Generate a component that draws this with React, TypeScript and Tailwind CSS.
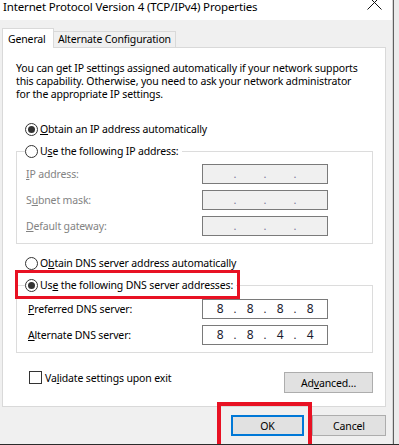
import React from 'react';

function Radio({ checked }: { checked?: boolean }) {
  return (
    <span className="w-[13px] h-[13px] rounded-full border border-[#333333] bg-white flex items-center justify-center shrink-0">
      {checked && <span className="w-[7px] h-[7px] rounded-full bg-[#333333]" />}
    </span>
  );
}

function IpField({ values, disabled }: { values?: string[]; disabled?: boolean }) {
  const cells = values ?? ['', '', '', ''];
  return (
    <div
      className={
        disabled
          ? 'w-[126px] h-[20px] border border-[#7a7a7a] bg-[#f0f0f0] flex items-center pl-[3px] text-[#7a7a9a]'
          : 'w-[126px] h-[20px] border border-[#7a7a7a] bg-white flex items-center pl-[3px] text-[#1a1a2e]'
      }
    >
      {cells.map((v, i) => (
        <React.Fragment key={i}>
          <span className="w-[28px] text-center text-[12px] leading-[18px]">{v}</span>
          {i < 3 && <span className="w-[2px] flex justify-center text-[11px] leading-[18px]">.</span>}
        </React.Fragment>
      ))}
    </div>
  );
}

function FieldRow({ label, values, disabled }: { label: React.ReactNode; values?: string[]; disabled?: boolean }) {
  return (
    <div className="flex items-center h-[20px]">
      <span className={disabled ? 'w-[177px] pl-[1px] text-[#838383]' : 'w-[177px] pl-[3px] text-black'}>{label}</span>
      <IpField values={values} disabled={disabled} />
    </div>
  );
}

export default function App() {
  return (
    <div className="w-[399px] h-[445px] flex flex-col bg-[#f0f0f0] overflow-hidden font-['Noto_Sans',sans-serif] text-[10.5px] tracking-[-0.15px] leading-[14px] text-black">
      <div className="flex h-[444px]">
        <div className="w-[393px] flex flex-col border-r border-[#d4d4d4] overflow-hidden">
          {/* title bar */}
          <div className="h-[20px] bg-white flex items-start justify-between pl-[3px] pr-[10px] shrink-0">
            <span className="text-[11.5px] leading-[14px] whitespace-nowrap">Internet Protocol Version 4 (TCP/IPv4) Properties</span>
            <svg width="15" height="15" viewBox="0 0 15 15" className="-mt-[5px]" fill="none" stroke="#111" strokeWidth="1">
              <path d="M0.5 0.5 L14.5 14.5 M14.5 0.5 L0.5 14.5" />
            </svg>
          </div>

          {/* tabs */}
          <div className="mt-[8px] pl-[2px] h-[19px] flex items-end">
            <div className="relative z-10 -mb-px w-[52px] h-[20px] bg-white border border-b-0 border-[#d9d9d9] pl-[5px] pt-[2px] leading-[16px] whitespace-nowrap">
              General
            </div>
            <div className="w-[122px] h-[16px] border-t border-r border-[#d9d9d9] pl-[4px] leading-[15px] whitespace-nowrap">
              Alternate Configuration
            </div>
          </div>

          {/* panel */}
          <div className="ml-[2px] w-[384px] h-[360px] bg-white border border-[#d9d9d9] flex flex-col pl-[13px] pr-[12px] shrink-0">
            <p className="mt-[14px] leading-[13px] whitespace-nowrap">
              You can get IP settings assigned automatically if your network supports
              <br />
              this capability. Otherwise, you need to ask your network administrator
              <br />
              for the appropriate IP settings.
            </p>

            <div className="mt-[21px] ml-[9px] h-[14px] flex items-center gap-[2px]">
              <Radio checked />
              <span>
                <u>O</u>btain an IP address automatically
              </span>
            </div>

            <fieldset className="mt-[8px] w-[357px] border border-[#dcdcdc] px-[8px] pb-[7px]">
              <legend className="pr-[3px]">
                <span className="h-[14px] flex items-center gap-[2px]">
                  <Radio />
                  <span>
                    U<u>s</u>e the following IP address:
                  </span>
                </span>
              </legend>
              <div className="mt-[6px] flex flex-col gap-[6px]">
                <FieldRow disabled label={<><u>I</u>P address:</>} />
                <FieldRow disabled label={<>S<u>u</u>bnet mask:</>} />
                <FieldRow disabled label={<><u>D</u>efault gateway:</>} />
              </div>
            </fieldset>

            <div className="mt-[12px] ml-[9px] h-[14px] flex items-center gap-[2px]">
              <Radio />
              <span>
                O<u>b</u>tain DNS server address automatically
              </span>
            </div>

            <fieldset className="mt-[8px] w-[357px] border border-[#dcdcdc] px-[8px] pb-[7px]">
              <legend className="pr-[3px]">
                <span className="relative h-[14px] flex items-center gap-[2px]">
                  <Radio checked />
                  <span>
                    Us<u>e</u> the following DNS server addresses:
                  </span>
                  <span className="absolute -left-[10px] -top-[8px] w-[225px] h-[29px] border-[3px] border-[#e81123] pointer-events-none" />
                </span>
              </legend>
              <div className="mt-[7px] flex flex-col gap-[6px]">
                <FieldRow label={<><u>P</u>referred DNS server:</>} values={['8', '8', '8', '8']} />
                <FieldRow label={<><u>A</u>lternate DNS server:</>} values={['8', '8', '4', '4']} />
              </div>
            </fieldset>

            <div className="mt-[18px] w-[357px] flex justify-between items-start">
              <div className="ml-[13px] h-[13px] flex items-center gap-[3px]">
                <span className="w-[13px] h-[13px] border border-[#333333] bg-white shrink-0" />
                <span>
                  Va<u>l</u>idate settings upon exit
                </span>
              </div>
              <button className="mt-px w-[89px] h-[21px] bg-[#e1e1e1] border border-[#adadad] flex items-center justify-center">
                <span>
                  Ad<u>v</u>anced...
                </span>
              </button>
            </div>
          </div>

          {/* dialog buttons */}
          <div className="mt-[8px] flex justify-end gap-[8px] pr-[6px]">
            <div className="relative">
              <button className="w-[73px] h-[21px] bg-[#e1e1e1] border-2 border-[#0078d7] flex items-center justify-center">
                OK
              </button>
              <span className="absolute -left-[14px] -top-[13px] w-[95px] h-[50px] border-[4px] border-[#e81123] pointer-events-none z-10" />
            </div>
            <button className="w-[74px] h-[21px] bg-[#e1e1e1] border border-[#adadad] flex items-center justify-center">
              Cancel
            </button>
          </div>
        </div>
        <div className="w-px bg-[#5f5f5f]" />
        <div className="flex-1 bg-[#ebebeb]" />
      </div>
      <div className="h-px bg-[#2b2b2b]" />
    </div>
  );
}
